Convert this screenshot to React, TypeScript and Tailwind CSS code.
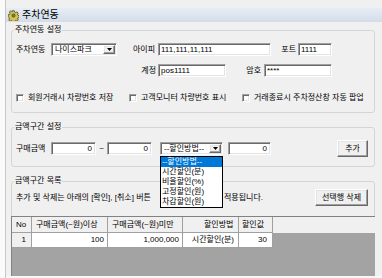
import React from 'react';

const sunken =
  'bg-white border border-t-[#a0a0a0] border-l-[#a0a0a0] border-b-white border-r-white shadow-[inset_1px_1px_0_#696969,inset_-1px_-1px_0_#e3e3e3]';
const raised =
  'bg-[#f0f0f0] border border-t-white border-l-white border-b-[#696969] border-r-[#696969] shadow-[inset_-1px_-1px_0_#a0a0a0,inset_1px_1px_0_#e3e3e3]';

function GearIcon() {
  return (
    <svg width="11" height="11" viewBox="0 0 12 12">
      <path
        d="M5 0.8h2l.3 1.5 1.2.6 1.3-.9 1.4 1.4-.9 1.3.6 1.2 1.5.3v2l-1.5.3-.6 1.2.9 1.3-1.4 1.4-1.3-.9-1.2.6-.3 1.5H5l-.3-1.5-1.2-.6-1.3.9-1.4-1.4.9-1.3-.6-1.2L.3 7V5l1.5-.3.6-1.2-.9-1.3 1.4-1.4 1.3.9 1.2-.6z"
        fill="#d7c24a"
        stroke="#3c3c28"
        strokeWidth="0.8"
      />
      <circle cx="6" cy="6" r="1.8" fill="#6d8a3a" stroke="#3c3c28" strokeWidth="0.6" />
    </svg>
  );
}

function Arrow() {
  return (
    <div className={`${raised} w-[12px] h-full flex items-center justify-center`}>
      <svg width="5" height="3" viewBox="0 0 5 3">
        <polygon points="0,0 5,0 2.5,3" fill="#000" />
      </svg>
    </div>
  );
}

function Combo({ text, w }: { text: string; w: string }) {
  return (
    <div className={`${sunken} ${w} h-[13px] flex items-stretch p-[1px]`}>
      <span className="flex-1 pl-[2px] leading-[9px] truncate">{text}</span>
      <Arrow />
    </div>
  );
}

function Input({ value, w, right }: { value: string; w: string; right?: boolean }) {
  return (
    <div className={`${sunken} ${w} h-[13px] px-[2px] flex items-center ${right ? 'justify-end pr-[3px]' : ''}`}>
      {value}
    </div>
  );
}

function Check({ label, w }: { label: string; w: string }) {
  return (
    <div className={`flex items-center gap-[4px] ${w}`}>
      <span className={`${sunken} w-[8px] h-[8px]`} />
      <span>{label}</span>
    </div>
  );
}

function Group({ title, className, children }: { title: string; className?: string; children: React.ReactNode }) {
  return (
    <fieldset className={`border border-[#d5d5d5] rounded-[3px] px-[4px] ${className ?? ''}`}>
      <legend className="-ml-[2px] px-[1px] h-[10px] leading-[10px]">{title}</legend>
      {children}
    </fieldset>
  );
}

const options = ['--할인방법--', '시간할인(분)', '비율할인(%)', '고정할인(원)', '차감할인(원)'];

export default function App() {
  return (
    <div className="w-[382px] h-[278px] overflow-hidden bg-[#f0f0f0] flex text-[8px] leading-[10px] text-black font-['Liberation_Sans','Noto_Sans_CJK_KR',sans-serif]">
      <div className="w-[6px] h-full bg-[#fafafa] border-r border-[#c8c8c8]" />
      <div className="flex-1 flex flex-col min-w-0">
        <div className="h-[8px]" />
        <div className="h-[14px] flex items-center gap-[3px] pl-[2px] bg-gradient-to-b from-[#e6edf5] to-[#d3dce8]">
          <GearIcon />
          <span className="text-[10px] leading-[12px]">주차연동</span>
        </div>

        <div className="flex-1 flex flex-col pl-[5px] pr-[7px] min-h-0">
          {/* 주차연동 설정 */}
          <Group title="주차연동 설정" className="mt-[3px]">
            <div className="pt-[8px] flex items-center h-[21px]">
              <span className="w-[35px]">주차연동</span>
              <Combo text="나이스파크" w="w-[66px]" />
              <span className="w-[41px] text-right pr-[3px]">아이피</span>
              <Input value="111,111,11,111" w="w-[113px]" />
              <span className="w-[27px] text-right pr-[2px]">포트</span>
              <Input value="1111" w="w-[34px]" />
            </div>
            <div className="mt-[8px] flex items-center h-[13px]">
              <span className="w-[142px] text-right pr-[2px]">계정</span>
              <Input value="pos1111" w="w-[68px]" />
              <span className="w-[38px] text-right pr-[3px]">암호</span>
              <Input value="****" w="w-[68px]" />
            </div>
            <div className="mt-[16px] mb-[9px] flex items-center h-[10px]">
              <Check label="회원거래시 차량번호 저장" w="w-[113px]" />
              <Check label="고객모니터 차량번호 표시" w="w-[113px]" />
              <Check label="거래종료시 주차정산창 자동 팝업" w="flex-1" />
            </div>
          </Group>

          {/* 금액구간 설정 */}
          <Group title="금액구간 설정" className="mt-[9px]">
            <div className="pt-[8px] pb-[9px] flex items-center h-[34px] pr-[2px]">
              <span className="w-[35px]">구매금액</span>
              <Input value="0" w="w-[45px]" right />
              <span className="w-[11px] text-center">~</span>
              <Input value="0" w="w-[45px]" right />
              <div className="relative ml-[8px]">
                <Combo text="--할인방법--" w="w-[63px]" />
                <div className="absolute left-0 top-[14px] w-[63px] z-10 bg-white border border-black">
                  {options.map((o, i) => (
                    <div
                      key={o}
                      className={`h-[10px] leading-[10px] pl-[1px] ${i === 0 ? 'bg-[#0078d7] text-white' : ''}`}
                    >
                      {o}
                    </div>
                  ))}
                </div>
              </div>
              <div className="ml-[5px]">
                <Input value="0" w="w-[43px]" right />
              </div>
              <button className={`${raised} ml-auto w-[31px] h-[17px] leading-[10px]`}>추가</button>
            </div>
          </Group>

          {/* 금액구간 목록 */}
          <fieldset className="mt-[9px] border border-[#d5d5d5] rounded-[3px] px-[4px] flex-1 flex flex-col min-h-0">
            <legend className="-ml-[2px] px-[1px] h-[10px] leading-[10px]">금액구간 목록</legend>
            <div className="pt-[2px] flex items-center h-[21px] pr-[2px]">
              {/* the open dropdown list covers the middle of this sentence */}
              <span className="w-[143px] overflow-hidden whitespace-nowrap">추가 및 삭제는 아래의 [확인], [취소] 버튼</span>
              <span className="w-[65px]" />
              <span>적용됩니다.</span>
              <button className={`${raised} ml-auto w-[53px] h-[17px] leading-[10px]`}>선택행 삭제</button>
            </div>
            <div className="mt-[9px] -mx-[5px] -mb-[1px] flex-1 bg-[#a3a3a3] border-t border-l border-[#828282]">
              <div className="flex h-[16px] bg-[#f0f0f0]">
                <div className="w-[20px] pl-[4px] flex items-center border-r border-b border-[#a0a0a0]">No</div>
                <div className="w-[76px] pl-[4px] flex items-center border-r border-b border-[#a0a0a0]">구매금액(~원)이상</div>
                <div className="w-[75px] pl-[4px] flex items-center border-r border-b border-[#a0a0a0]">구매금액(~원)미만</div>
                <div className="w-[56px] pl-[21px] flex items-center border-r border-b border-[#a0a0a0]">할인방법</div>
                <div className="w-[34px] pl-[3px] flex items-center border-r border-b border-[#a0a0a0]">할인값</div>
              </div>
              <div className="flex h-[15px]">
                <div className="w-[20px] pr-[5px] flex items-center justify-end bg-[#f0f0f0] border-r border-b border-[#a0a0a0]">1</div>
                <div className="w-[76px] pr-[3px] flex items-center justify-end bg-white border-r border-b border-[#a0a0a0]">100</div>
                <div className="w-[75px] pr-[3px] flex items-center justify-end bg-white border-r border-b border-[#a0a0a0]">1,000,000</div>
                <div className="w-[56px] pr-[4px] flex items-center justify-end bg-white border-r border-b border-[#a0a0a0]">시간할인(분)</div>
                <div className="w-[34px] pr-[5px] flex items-center justify-end bg-white border-r border-b border-[#a0a0a0]">30</div>
              </div>
            </div>
          </fieldset>
        </div>
        <div className="h-[2px] bg-[#f7f7f7]" />
      </div>
    </div>
  );
}
